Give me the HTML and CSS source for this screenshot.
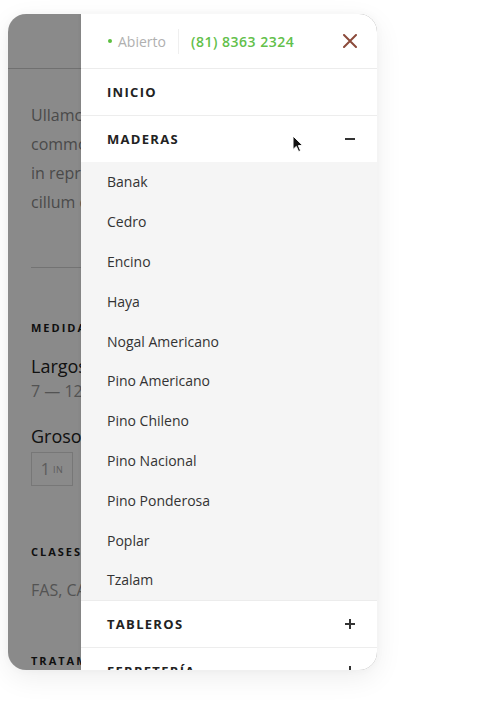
FILE: index.html
```html
<!DOCTYPE html>
<html lang="es">
<head>
<meta charset="utf-8">
<title>Menú</title>
<link rel="stylesheet" href="styles.css">
</head>
<body>
<div class="stage">
  <div class="phone">
    <div class="page">
      <div class="page-header"></div>
      <p class="intro">Ullamco laboris nisi ut<br>commodo consequat. Duis<br>in reprehenderit in voluptate<br>cillum dolore eu fugiat</p>
      <div class="rule"></div>
      <div class="label">MEDIDAS</div>
      <div class="big">Largos</div>
      <div class="muted">7 — 12 ft</div>
      <div class="big grosor">Grosor</div>
      <div class="chips"><span class="chip">1<small>IN</small></span></div>
      <div class="label clases">CLASES</div>
      <div class="muted clases-val">FAS, CAL, SEL</div>
      <div class="label trat">TRATAMIENTO</div>
    </div>
    <div class="overlay"></div>
    <nav class="drawer">
      <div class="drawer-top">
        <span class="dot"></span>
        <span class="status">Abierto</span>
        <span class="divider"></span>
        <span class="phone-num">(81) 8363 2324</span>
        <svg class="close" width="14" height="14" viewBox="0 0 14 14"><path d="M1 1L13 13M13 1L1 13" stroke="#8c4b3b" stroke-width="2" stroke-linecap="round"/></svg>
      </div>
      <div class="nav-row"><span>INICIO</span></div>
      <div class="nav-row open"><span>MADERAS</span><span class="minus"></span></div>
      <ul class="sub">
        <li>Banak</li>
        <li>Cedro</li>
        <li>Encino</li>
        <li>Haya</li>
        <li>Nogal Americano</li>
        <li>Pino Americano</li>
        <li>Pino Chileno</li>
        <li>Pino Nacional</li>
        <li>Pino Ponderosa</li>
        <li>Poplar</li>
        <li>Tzalam</li>
      </ul>
      <div class="nav-row"><span>TABLEROS</span><span class="plus"></span></div>
      <div class="nav-row"><span>FERRETERÍA</span><span class="plus"></span></div>
    </nav>
    <svg class="cursor" width="12" height="18" viewBox="0 0 12 18"><path d="M1 1L1 14.5L4.3 11.4L6.6 16.6L8.6 15.7L6.4 10.6L10.8 10.6Z" fill="#111" stroke="#fff" stroke-width="1" stroke-linejoin="round"/></svg>
  </div>
</div>
</body>
</html>
```

FILE: styles.css
```css
* { box-sizing: border-box; }
html, body { margin: 0; padding: 0; background: #fff; }
body { font-family: "Open Sans", "Liberation Sans", sans-serif; }

.stage { padding: 14px 0 0 8px; width: 484px; height: 706px; }

.phone {
  position: relative;
  width: 369px;
  height: 656px;
  border-radius: 18px;
  overflow: hidden;
  background: #fff;
  box-shadow: 0 8px 28px rgba(0,0,0,0.07), 0 0 10px rgba(0,0,0,0.03);
}

/* background page */
.page { padding: 0 0 0 23px; color: #444; }
.page-header { height: 55px; margin-left: -23px; border-bottom: 1px solid #cfcfcf; }
.intro { margin: 32px 0 0; font-size: 16px; line-height: 29px; color: #8a8a8a; white-space: nowrap; }
.rule { margin-top: 50px; height: 1px; background: #d4d4d4; }
.label { margin-top: 52px; font-size: 11px; font-weight: 700; letter-spacing: 2px; color: #1c1c1c; line-height: 16px; }
.big { margin-top: 18px; font-size: 18px; line-height: 24px; color: #222; }
.muted { font-size: 16px; line-height: 26px; color: #9a9a9a; white-space: nowrap; }
.grosor { margin-top: 20px; }
.chips { margin-top: 4px; display: flex; }
.chip { width: 42px; height: 34px; border: 1px solid #ddd; display: flex; align-items: center; justify-content: center; gap: 3px; font-size: 16px; color: #aaa; }
.chip small { font-size: 9px; letter-spacing: 0.5px; }
.clases { margin-top: 58px; }
.clases-val { margin-top: 17px; }
.trat { margin-top: 50px; }

.overlay { position: absolute; inset: 0; background: rgba(0,0,0,0.46); }

/* drawer */
.drawer {
  position: absolute;
  top: 0; right: 0; bottom: 0;
  width: 296px;
  background: #fff;
  box-shadow: -1px 0 3px rgba(0,0,0,0.06);
}
.drawer-top {
  height: 55px;
  border-bottom: 1px solid #ececec;
  display: flex;
  align-items: center;
  padding: 0 20px 0 27px;
}
.dot { width: 4px; height: 4px; border-radius: 50%; background: #5cbf3f; margin-right: 6px; }
.status { font-size: 14px; color: #b0b0b0; }
.divider { width: 1px; height: 25px; background: #efefef; margin: 0 12px; }
.phone-num { font-size: 14px; font-weight: 600; color: #62c04a; letter-spacing: 0.5px; }
.close { margin-left: auto; }

.nav-row {
  height: 47px;
  border-bottom: 1px solid #ededed;
  display: flex;
  align-items: center;
  justify-content: space-between;
  padding: 0 22px 0 26px;
  font-size: 13px;
  font-weight: 700;
  letter-spacing: 1.3px;
  color: #222;
}
.nav-row.open { height: 46px; border-bottom: 0; }
.minus { width: 10px; height: 2px; background: #333; }
.plus { position: relative; width: 10px; height: 10px; }
.plus::before, .plus::after { content: ""; position: absolute; background: #333; }
.plus::before { left: 0; top: 4px; width: 10px; height: 2px; }
.plus::after { left: 4px; top: 0; width: 2px; height: 10px; }

.sub {
  list-style: none;
  margin: 0;
  padding: 0;
  background: #f5f5f5;
  border-bottom: 1px solid #ececec;
}
.sub li {
  height: 39.8px;
  display: flex;
  align-items: center;
  padding-left: 26px;
  font-size: 14px;
  color: #333;
}

.cursor { position: absolute; left: 284px; top: 121px; }
```
